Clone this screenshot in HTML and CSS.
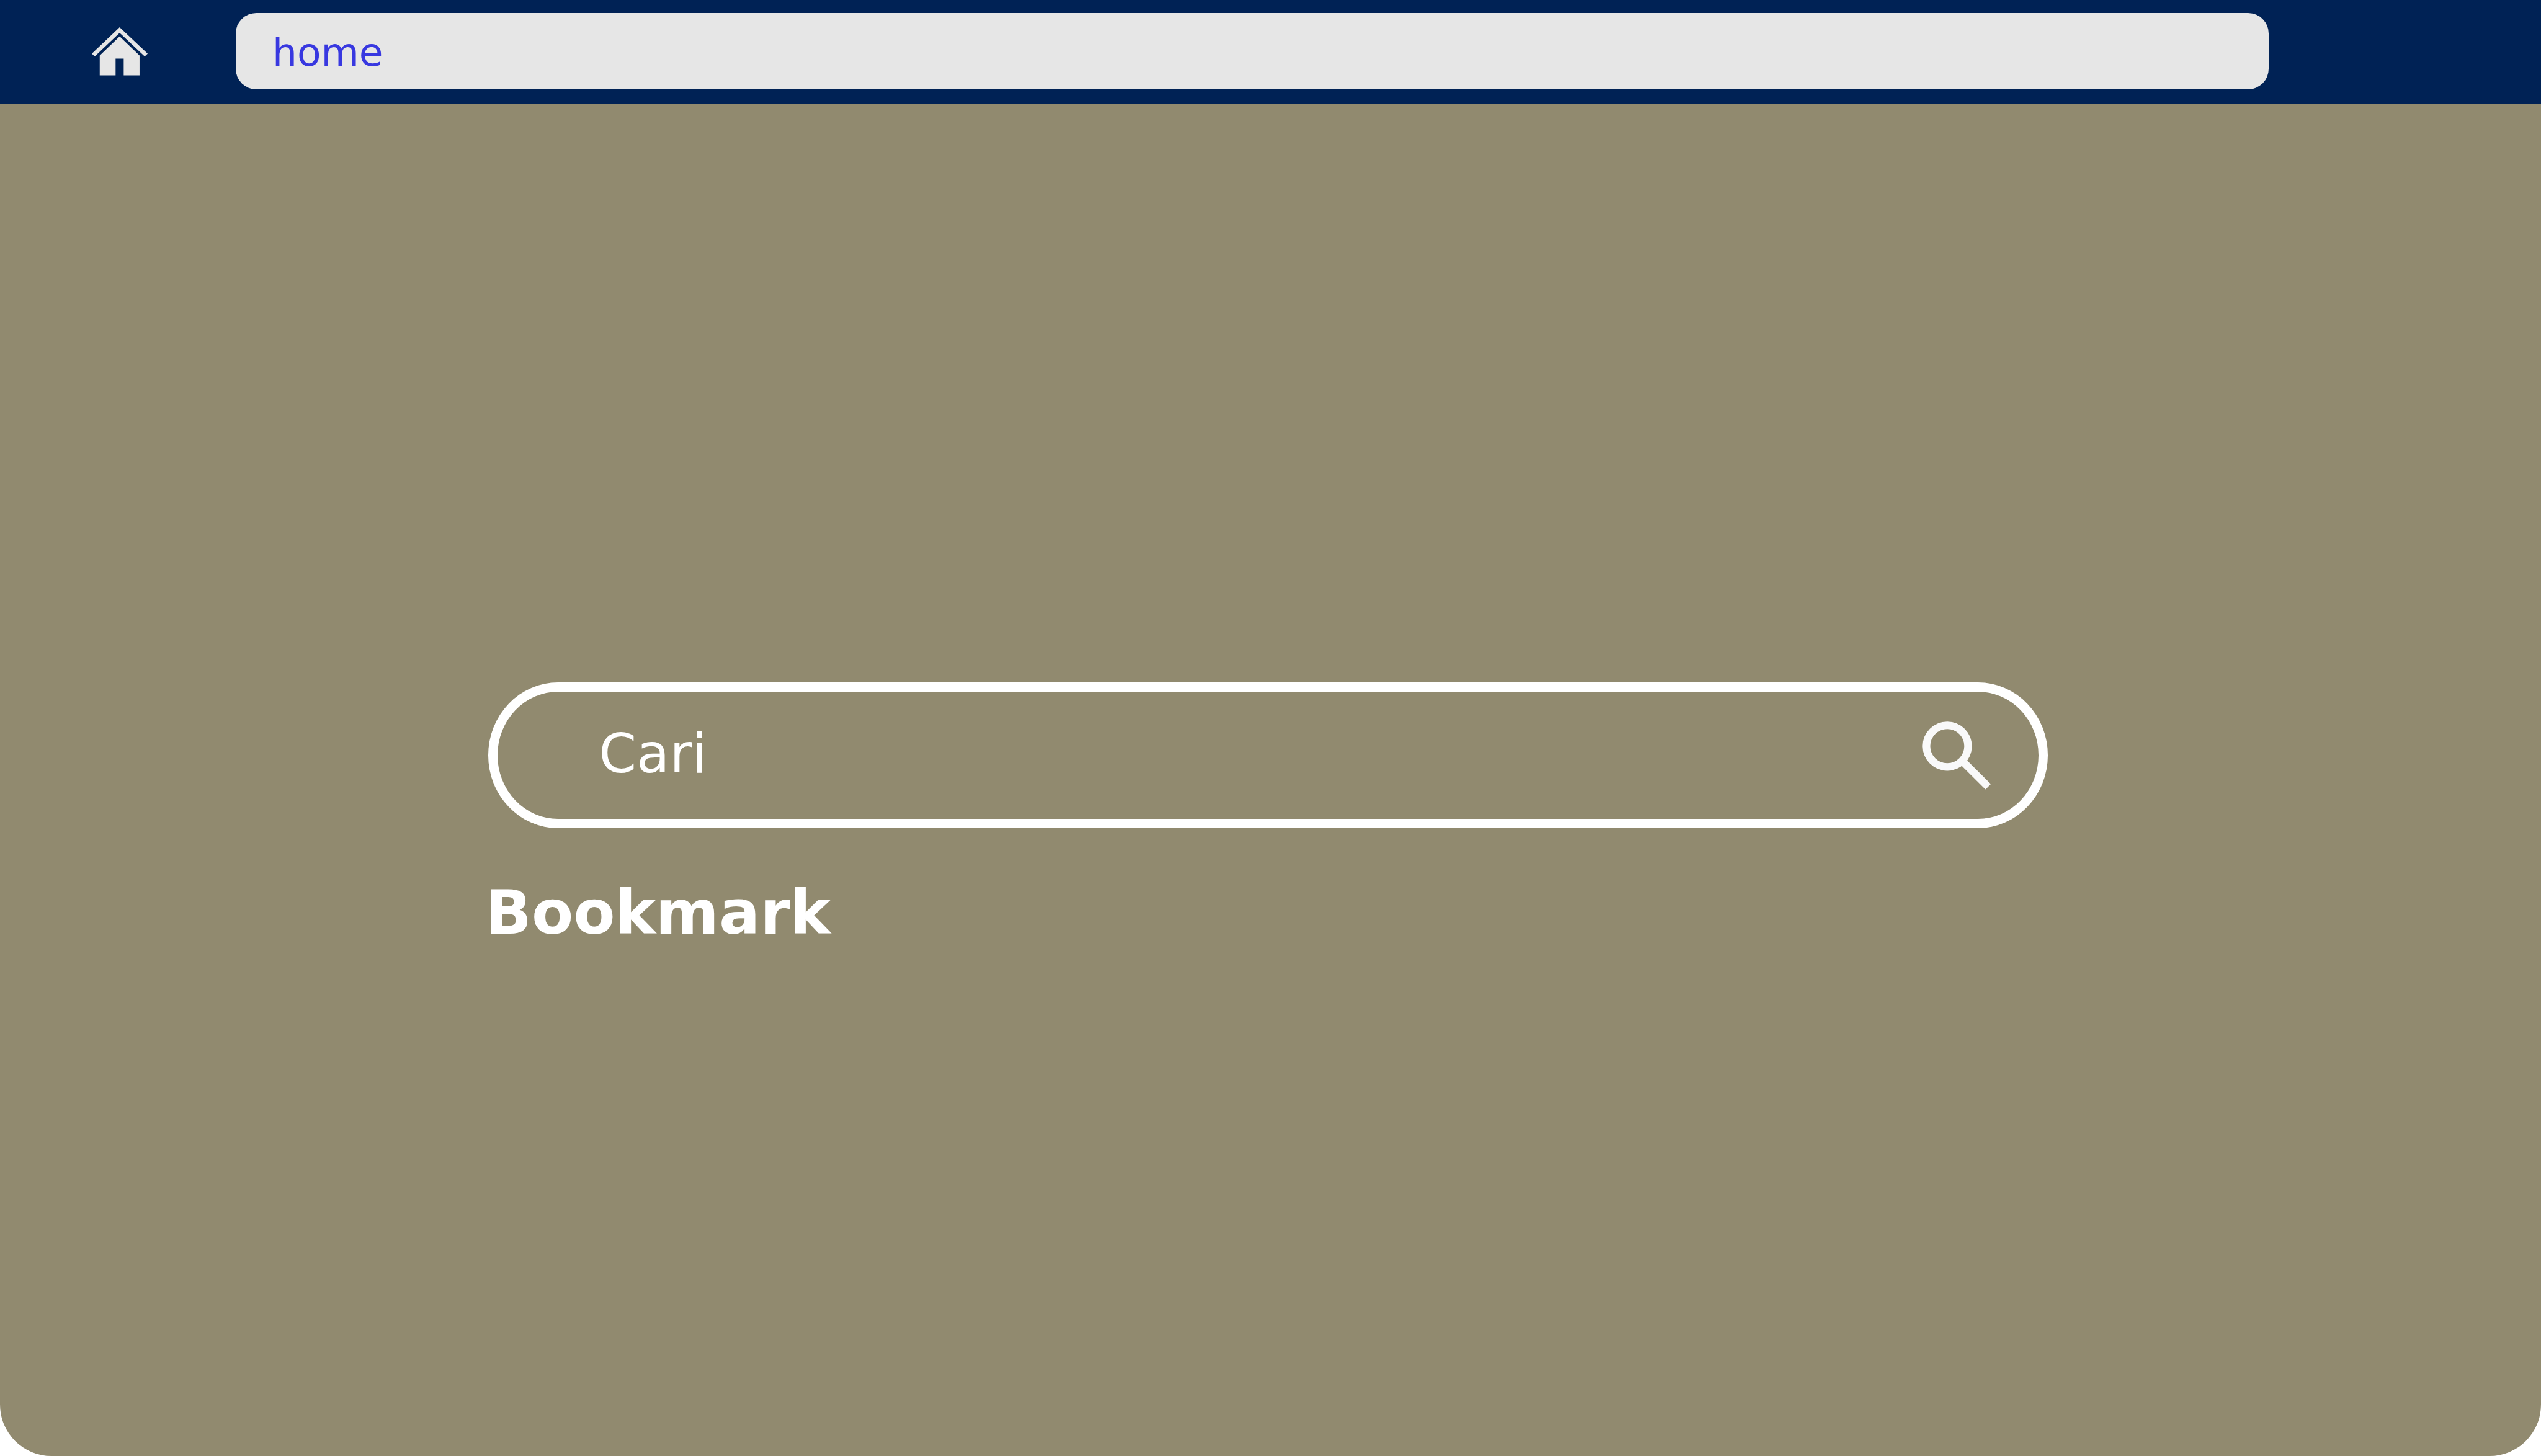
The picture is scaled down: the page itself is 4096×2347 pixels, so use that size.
FILE: index.html
```html
<!DOCTYPE html>
<html lang="id">
<head>
<meta charset="utf-8">
<title>home</title>
<link rel="stylesheet" href="styles.css">
</head>
<body>
<header class="toolbar">
  <a class="home-link" href="#" aria-label="home">
    <svg class="home-icon" viewBox="84 101 324 280" aria-hidden="true">
      <path d="M245.500 101L408 254L391 270L245.500 133L101 270L84 254Z"/>
      <path d="M245.500 154L361 264V380H269V282H222V380H130V264Z"/>
    </svg>
  </a>
  <input class="address" type="text" value="home" aria-label="Address">
</header>
<main class="start">
  <form class="search" role="search">
    <input class="search-input" type="text" placeholder="Cari" aria-label="Cari">
    <button class="search-button" type="button" aria-label="Cari">
      <svg class="search-icon" viewBox="126 296 397 397" aria-hidden="true">
        <circle cx="270" cy="439.500" r="121"/>
        <path d="M365 534L508 676"/>
      </svg>
    </button>
  </form>
  <h1 class="section-title">Bookmark</h1>
</main>
</body>
</html>
```
FILE: styles.css
```css
* {
  box-sizing: border-box;
}

body {
  margin: 0;
  min-height: 100vh;
  display: flex;
  flex-direction: column;
  background: #ffffff;
  font-family: Verdana, "DejaVu Sans", sans-serif;
}

.toolbar {
  display: flex;
  align-items: center;
  gap: 142px;
  height: 168px;
  padding: 0 439px 3px 148px;
  background: #002255;
}

.home-link,
.home-icon,
.search-icon {
  display: block;
}

.home-icon {
  width: 90px;
  height: 78px;
  fill: #e6e6e6;
}

.address {
  flex: 1;
  min-width: 0;
  height: 123px;
  padding: 4px 59px 0;
  border: 0;
  border-radius: 33px;
  background: #e6e6e6;
  color: #3838e0;
  font-family: inherit;
  font-size: 63px;
}

.start {
  flex: 1;
  padding: 932px 19.4% 0 19.1%;
  border-radius: 0 0 83px 83px;
  background: #918a6f;
}

.search {
  display: flex;
  align-items: center;
  height: 235px;
  margin-left: 5px;
  padding: 0 77px 0 163px;
  border: 15px solid #ffffff;
  border-radius: 113px / 118px;
}

.search-input {
  flex: 1;
  min-width: 0;
  height: 120px;
  padding: 0 0 5px;
  border: 0;
  background: none;
  color: #ffffff;
  font-family: inherit;
  font-size: 87px;
}

.search-input::placeholder {
  color: #ffffff;
  opacity: 1;
}

.search-button {
  padding: 0;
  border: 0;
  background: none;
}

.search-icon {
  width: 110px;
  height: 110px;
  fill: none;
  stroke: #f9f9f9;
  stroke-width: 44;
}

.section-title {
  margin: 79px 0 0;
  color: #ffffff;
  font-size: 98px;
  line-height: 114px;
}
```
